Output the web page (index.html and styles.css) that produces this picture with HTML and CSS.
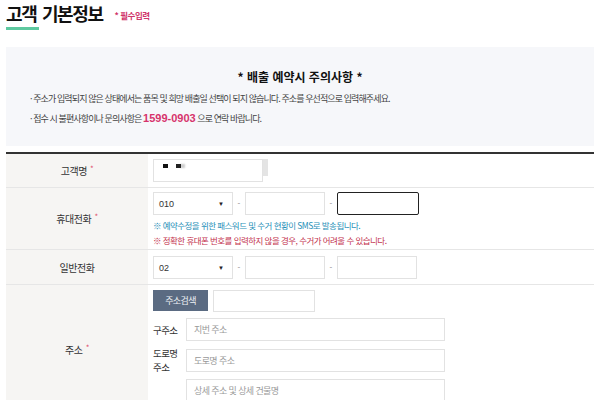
FILE: index.html
```html
<!DOCTYPE html>
<html lang="ko">
<head>
<meta charset="utf-8">
<link rel="stylesheet" href="styles.css">
</head>
<body>
<div class="page">
  <header class="head">
    <h1 class="title">고객 기본정보</h1>
    <span class="req">* 필수입력</span>
  </header>
  <div class="bar"></div>

  <section class="notice">
    <h2 class="notice-title">* 배출 예약시 주의사항 *</h2>
    <p class="notice-line">· 주소가 입력되지 않은 상태에서는 품목 및 희망 배출일 선택이 되지 않습니다. 주소를 우선적으로 입력해주세요.</p>
    <p class="notice-line">· 접수 시 불편사항이나 문의사항은 <strong class="tel">1599-0903</strong> 으로 연락 바랍니다.</p>
  </section>

  <div class="form">
    <div class="row row-name">
      <div class="label">고객명 <i class="star">*</i></div>
      <div class="field">
        <div class="name-wrap">
          <div class="input name-input"><span class="mask m1"></span><span class="mask m2"></span></div>
          <div class="scroll"></div>
        </div>
      </div>
    </div>

    <div class="row row-mobile">
      <div class="label">휴대전화 <i class="star">*</i></div>
      <div class="field">
        <div class="phone">
          <div class="select"><span>010</span><span class="arrow">▼</span></div>
          <span class="dash">-</span>
          <div class="input ph"></div>
          <span class="dash">-</span>
          <div class="input ph focus"></div>
        </div>
        <p class="hint blue">※ 예약수정을 위한 패스워드 및 수거 현황이 SMS로 발송됩니다.</p>
        <p class="hint red">※ 정확한 휴대폰 번호를 입력하지 않을 경우, 수거가 어려울 수 있습니다.</p>
      </div>
    </div>

    <div class="row row-tel">
      <div class="label">일반전화</div>
      <div class="field">
        <div class="phone">
          <div class="select"><span>02</span><span class="arrow">▼</span></div>
          <span class="dash">-</span>
          <div class="input ph"></div>
          <span class="dash">-</span>
          <div class="input ph"></div>
        </div>
      </div>
    </div>

    <div class="row row-addr">
      <div class="label">주소 <i class="star">*</i></div>
      <div class="field">
        <div class="zip">
          <button class="btn">주소검색</button>
          <div class="input zip-input"></div>
        </div>
        <div class="addr">
          <span class="sub">구주소</span>
          <div class="input wide"><span class="ph-text">지번 주소</span></div>
        </div>
        <div class="addr">
          <span class="sub">도로명<br>주소</span>
          <div class="input wide"><span class="ph-text">도로명 주소</span></div>
        </div>
        <div class="addr">
          <span class="sub"></span>
          <div class="input wide"><span class="ph-text">상세 주소 및 상세 건물명</span></div>
        </div>
      </div>
    </div>
  </div>
</div>
</body>
</html>
```

FILE: styles.css
```css
* { box-sizing: border-box; }
html, body { margin: 0; padding: 0; background: #fff; }
body {
  font-family: "Noto Sans CJK KR", "Noto Sans", sans-serif;
  color: #333;
  width: 600px;
  height: 400px;
  overflow: hidden;
}
.page { padding: 0 6px; }

.head {
  display: flex;
  align-items: baseline;
  gap: 12px;
  padding-top: 2px;
  height: 26px;
}
.title {
  margin: 0;
  font-size: 18px;
  line-height: 22px;
  font-weight: 700;
  letter-spacing: -1.4px;
  word-spacing: 2px;
  color: #111;
}
.req {
  font-size: 8.5px;
  font-weight: 700;
  color: #d0356a;
  letter-spacing: -0.5px;
  position: relative;
  top: -2px;
}
.bar {
  width: 33px;
  height: 3px;
  background: #5ec9a0;
  margin-top: 1px;
}

.notice {
  margin-top: 17px;
  background: #f6f7fa;
  height: 99px;
  padding: 22px 0 0 24px;
}
.notice-title {
  margin: 0;
  text-align: center;
  font-size: 12px;
  line-height: 16px;
  font-weight: 700;
  color: #111;
  padding-right: 24px;
}
.notice-line {
  margin: 7px 0 0;
  font-size: 9px;
  line-height: 14px;
  letter-spacing: -0.9px;
  color: #444;
}
.notice-line + .notice-line { margin-top: 5px; }
.tel {
  color: #d6336c;
  font-size: 11px;
  font-weight: 700;
  letter-spacing: 0;
  font-family: "Liberation Sans", sans-serif;
}

.form {
  margin-top: 6px;
  border-top: 2px solid #333;
}
.row {
  display: grid;
  grid-template-columns: 142px 1fr;
  border-bottom: 1px solid #e6e6e6;
}
.label {
  background: #f6f5f3;
  display: flex;
  align-items: center;
  justify-content: center;
  font-size: 10px;
  letter-spacing: -0.4px;
  color: #333;
}
.star {
  font-style: normal;
  color: #e0506e;
  font-size: 8px;
  margin-left: 3px;
  position: relative;
  top: -2px;
}
.field { padding: 5px 0 0 5px; }

.row-name { height: 34px; }
.row-mobile { height: 62px; }
.row-mobile .field { padding-top: 4px; }
.row-tel { height: 35px; }
.row-tel .field { padding-top: 6px; }
.row-addr { height: 130px; }

.input {
  border: 1px solid #e2e2e2;
  background: #fff;
  height: 23px;
}
.name-wrap { display: flex; align-items: flex-start; }
.name-input { width: 110px; position: relative; }
.scroll { width: 5px; height: 17px; background: #e4e4e4; }
.mask { position: absolute; top: 4px; height: 4px; }
.m1 { left: 9px; width: 5px; background: #111; }
.m2 { left: 22px; width: 5px; background: #222; box-shadow: 4px 0 2px #ccc; }

.phone { display: flex; align-items: center; }
.select {
  width: 80px;
  height: 23px;
  border: 1px solid #e2e2e2;
  display: flex;
  align-items: center;
  justify-content: space-between;
  padding: 0 8px 0 5px;
  font-size: 9px;
  color: #333;
  font-family: "Liberation Sans", sans-serif;
}
.arrow { font-size: 6px; color: #222; }
.dash {
  width: 12px;
  text-align: center;
  font-size: 8px;
  color: #888;
}
.ph { width: 80px; }
.focus { border: 1px solid #222; border-radius: 2px; width: 82px; }

.hint {
  margin: 0;
  font-size: 8.5px;
  line-height: 15px;
  letter-spacing: -0.55px;
}
.hint.blue { color: #1f8fb8; margin-top: 3px; }
.hint.red { color: #c3324e; }

.zip { display: flex; gap: 5px; align-items: flex-start; }
.btn {
  width: 55px;
  height: 21px;
  border: 0;
  background: #5b6b82;
  color: #eef1f5;
  font-family: inherit;
  font-size: 9px;
  letter-spacing: -0.6px;
  padding: 0;
}
.zip-input { width: 102px; height: 22px; }
.addr {
  display: flex;
  align-items: center;
  margin-top: 5px;
}
.zip + .addr { margin-top: 6px; }
.sub {
  width: 33px;
  font-size: 9.5px;
  line-height: 14px;
  letter-spacing: -0.6px;
  color: #333;
}
.wide {
  width: 259px;
  display: flex;
  align-items: center;
  padding-left: 7px;
}
.ph-text {
  font-size: 9px;
  color: #999;
  letter-spacing: -0.6px;
}
```
